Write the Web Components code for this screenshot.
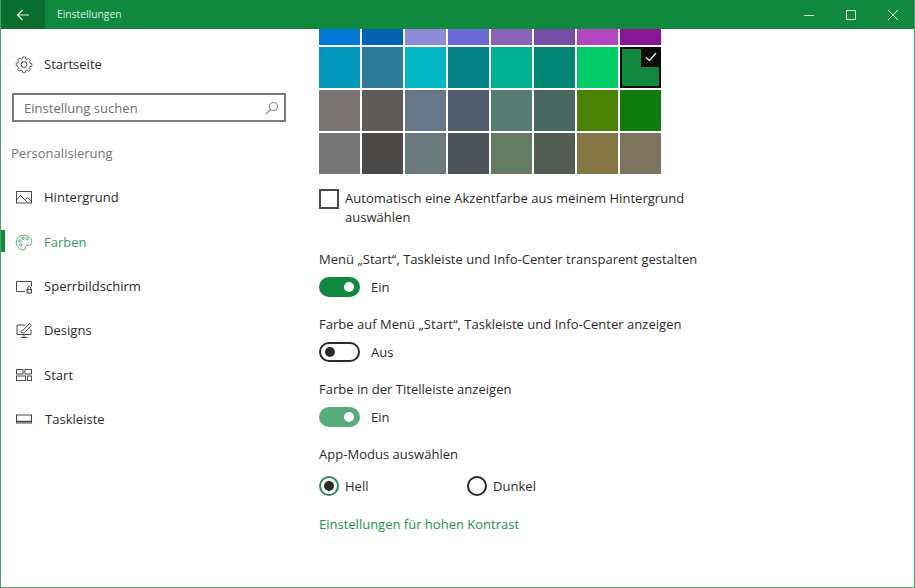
<!DOCTYPE html>
<html lang="de"><head><meta charset="utf-8"><title>Einstellungen</title>
<style>html,body{margin:0;padding:0;background:#fff}body{font-family:"Open Sans","Noto Sans",sans-serif;color:#2b2b2b}</style>
</head><body>
<settings-window>
  <title-bar slot="top" label="Einstellungen"></title-bar>
  <side-nav slot="side">
    <nav-item icon="gear" style="height:44px">Startseite</nav-item>
    <search-box placeholder="Einstellung suchen"></search-box>
    <nav-group>Personalisierung</nav-group>
    <nav-item icon="image">Hintergrund</nav-item>
    <nav-item icon="palette" active>Farben</nav-item>
    <nav-item icon="lock">Sperrbildschirm</nav-item>
    <nav-item icon="theme">Designs</nav-item>
    <nav-item icon="start">Start</nav-item>
    <nav-item icon="taskbar" style="--gap:12px">Taskleiste</nav-item>
  </side-nav>
  <color-page slot="main">
    <swatch-grid></swatch-grid>
    <check-row>Automatisch eine Akzentfarbe aus meinem Hintergrund auswählen</check-row>
    <toggle-row on label="Menü „Start“, Taskleiste und Info-Center transparent gestalten" style="margin-top:22px">Ein</toggle-row>
    <toggle-row label="Farbe auf Menü „Start“, Taskleiste und Info-Center anzeigen">Aus</toggle-row>
    <toggle-row on soft label="Farbe in der Titelleiste anzeigen">Ein</toggle-row>
    <radio-group label="App-Modus auswählen">
      <radio-opt checked style="width:148px">Hell</radio-opt>
      <radio-opt>Dunkel</radio-opt>
    </radio-group>
    <text-link>Einstellungen für hohen Kontrast</text-link>
  </color-page>
</settings-window>
<script>
const FONT='13px/20px "Open Sans",sans-serif;letter-spacing:.025px';
const def=(name,css,html)=>customElements.define(name,class extends HTMLElement{
  connectedCallback(){ if(this.shadowRoot) return;
    const r=this.attachShadow({mode:'open'});
    r.innerHTML='<style>'+css+'</style>'+(typeof html==='function'?html(this):html);
  }});
const ICONS={
 gear:'<path d="M7 1.2h3l.4 2.2 1.3.6 1.9-1.2 2 2-1.2 1.9.6 1.3 2.2.4v3l-2.2.4-.6 1.3 1.2 1.9-2 2-1.9-1.2-1.3.6-.4 2.2H7l-.4-2.2-1.3-.6-1.9 1.2-2-2 1.2-1.9-.6-1.3L-.2 11V8l2.2-.4.6-1.3-1.2-1.9 2-2 1.9 1.2 1.3-.6z" transform="translate(1.4 .9) scale(.9)"/><circle cx="9" cy="9.5" r="2.9"/>',
 image:'<rect x="1.5" y="3.5" width="15" height="11.5"/><path d="M1.5 12l4-4.500 6.500 6.500M10.500 11.500l2-2 4 3.500"/>',
 palette:'<path d="M9 2.200c4.400 0 7.800 2.900 7.800 6.700 0 2.500-1.800 3.600-3.600 3.400-1.700-.2-3 .4-2.900 1.800.1 1.200.2 2.900-1.500 2.900C4.700 17 1.200 13.600 1.200 9.400 1.200 5.300 4.700 2.200 9 2.200z"/><circle cx="5" cy="8" r="1.200"/><circle cx="8" cy="5.300" r="1.200"/><circle cx="12.200" cy="5.800" r="1.200"/><circle cx="5.800" cy="12" r="1.200"/>',
 lock:'<path d="M10 14.500H1.500v-10h15v5"/><rect x="11.500" y="12" width="5.500" height="4.500" fill="currentColor" stroke="none"/><rect x="12.600" y="13.200" width="3.300" height="2.200" fill="#fff" stroke="none"/><path d="M12.700 12V11a1.500 1.500 0 013 0v1"/>',
 theme:'<path d="M10.500 4H2v9.500h14V8.500M6 16.500h6.500M9 13.500v3"/><path d="M6 11.500c0-2 1.200-2.700 2.300-2.500L14.500 2.500l2 2-6.300 6.500c-.6 1-2.200 1-4.200.5z"/>',
 start:'<rect x="1.500" y="3.500" width="6.500" height="4.500"/><rect x="10" y="3.500" width="6.500" height="4.500"/><rect x="1.500" y="10" width="9" height="4.500"/><rect x="12.500" y="10" width="4" height="4.500"/>',
 taskbar:'<rect x="1.500" y="5" width="15" height="8"/><path d="M1.500 11.500h15" stroke-width="1.600"/>'
};
def('settings-window',
 ':host{display:flex;flex-direction:column;width:915px;height:588px;box-sizing:border-box;border:1px solid #4fa070;border-top:0;overflow:hidden;background:#fff}.b{flex:1;display:flex;min-height:0}',
 '<slot name="top"></slot><div class="b"><slot name="side"></slot><slot name="main"></slot></div>');
def('title-bar',
 ':host{display:flex;align-items:center;height:29px;margin:0 -1px;background:#10893e;color:#d9f2e1;font:10.300px/29px "Open Sans",sans-serif;flex:none}.back{width:45px;height:29px;background:#0c6d31;display:flex;align-items:center;justify-content:center}.t{margin-left:12px;flex:1}.w{display:flex}.w span{width:44px;height:29px;display:flex;align-items:center;justify-content:center}.w span.m{width:40px}svg{fill:none;stroke:#d9f2e1;stroke-width:1}',
 h=>`<div class="back"><svg width="14" height="12" viewBox="0 0 14 12"><path d="M13 6H1.500M6.500 1L1.500 6l5 5" stroke-width="1.200"/></svg></div><div class="t">${h.getAttribute('label')}</div><div class="w"><span><svg width="12" height="12"><path d="M1 6.500h10"/></svg></span><span class="m"><svg width="12" height="12"><rect x="1.500" y="1.500" width="9" height="9"/></svg></span><span><svg width="12" height="12"><path d="M1 1l10 10M11 1L1 11"/></svg></span></div>`);
def('side-nav',':host{display:block;width:318px;flex:none;padding-top:13px;box-sizing:border-box}','<slot></slot>');
def('nav-item',
 ':host{display:flex;align-items:center;height:44.400px;position:relative;font:'+FONT+';color:#2b2b2b}:host([active]){color:#3d9a63}:host([active])::before{content:"";position:absolute;left:0;top:11px;width:4px;height:22px;background:#10893e}svg{width:18px;height:18px;margin-left:14px;margin-right:var(--gap,11px);fill:none;stroke:currentColor;stroke-width:1;opacity:.85}',
 h=>`<svg viewBox="0 0 18 18">${ICONS[h.getAttribute('icon')]}</svg><slot></slot>`);
def('search-box',
 ':host{display:flex;align-items:center;width:274px;height:29px;box-sizing:border-box;margin:7px 0 0 11px;border:2px solid #7b7b7b;padding:0 5px 0 10px;font:'+FONT+';color:#6f6f6f}span{flex:1}svg{fill:none;stroke:#8a8a8a;stroke-width:1.100}',
 h=>`<span>${h.getAttribute('placeholder')}</span><svg width="14" height="14" viewBox="0 0 14 14"><circle cx="8.500" cy="5.500" r="4"/><path d="M5.500 8.500L1 13"/></svg>`);
def('nav-group',':host{display:block;margin:21px 0 12px 10px;font:'+FONT+';color:#767676}','<slot></slot>');
def('color-page',':host{display:block;flex:1;min-width:0}','<slot></slot>');
const COLORS=['0078d7','0063b1','8e8cd8','6b69d6','8764b8','744da9','b146c2','881798','0099bc','2d7d9a','00b7c3','038387','00b294','018574','00cc6a','10893e','7a7574','5d5a58','68768a','515c6b','567c73','486860','498205','107c10','767676','4c4a48','69797e','4a5459','647c64','525e54','847545','7e735f'];
def('swatch-grid',
 ':host{display:grid;grid-template-columns:repeat(8,41px);grid-template-rows:16px 41px 41px 41px;gap:2px;width:342px}div{position:relative}.sel{box-sizing:border-box;border:2px solid #0a0a0a}.sel i{position:absolute;top:-2px;right:-2px;width:20px;height:20px;background:#0a0a0a;display:flex;align-items:center;justify-content:center}svg{fill:none;stroke:#e8e8e8;stroke-width:1.300}',
 ()=>COLORS.map((c,i)=>i===15?`<div class="sel" style="background:#${c}"><i><svg width="12" height="10" viewBox="0 0 12 10"><path d="M1 5.500l3.500 3L11 1"/></svg></i></div>`:`<div style="background:#${c}"></div>`).join(''));
def('check-row',
 ':host{display:flex;margin-top:15px;width:380px;font:'+FONT+';line-height:19px;color:#2b2b2b}b{flex:none;width:20px;height:20px;box-sizing:border-box;border:2px solid #4a4a4a;margin-right:6px}',
 '<b></b><div><slot></slot></div>');
def('toggle-row',
 ':host{display:block;margin-top:17px;font:'+FONT+';color:#2b2b2b}.r{display:flex;align-items:center;margin-top:8px;height:20px}.t{width:41px;height:20px;box-sizing:border-box;border-radius:10px;border:2px solid #2b2b2b;position:relative;margin-right:11px}.t::after{content:"";position:absolute;left:4px;top:3px;width:10px;height:10px;border-radius:50%;background:#2b2b2b}:host([on]) .t{background:#10893e;border-color:#10893e}:host([soft]) .t{background:#58ab7b;border-color:#58ab7b}:host([on]) .t::after{left:auto;right:4px;background:#fff}',
 h=>`<div>${h.getAttribute('label')}</div><div class="r"><div class="t"></div><slot></slot></div>`);
def('radio-group',
 ':host{display:block;margin-top:17px;font:'+FONT+';color:#2b2b2b}.r{display:flex;margin-top:12px}',
 h=>`<div>${h.getAttribute('label')}</div><div class="r"><slot></slot></div>`);
def('radio-opt',
 ':host{display:flex;align-items:center;height:20px}b{width:20px;height:20px;box-sizing:border-box;border:2px solid #2b2b2b;border-radius:50%;margin-right:6px;display:flex;align-items:center;justify-content:center}:host([checked]) b{border-color:#2b8a58}:host([checked]) b::after{content:"";width:10px;height:10px;border-radius:50%;background:#2b2b2b}',
 '<b></b><slot></slot>');
def('text-link',':host{display:block;margin-top:18px;font:'+FONT+';letter-spacing:0;color:#1f9150}','<slot></slot>');
</script>
</body></html>
